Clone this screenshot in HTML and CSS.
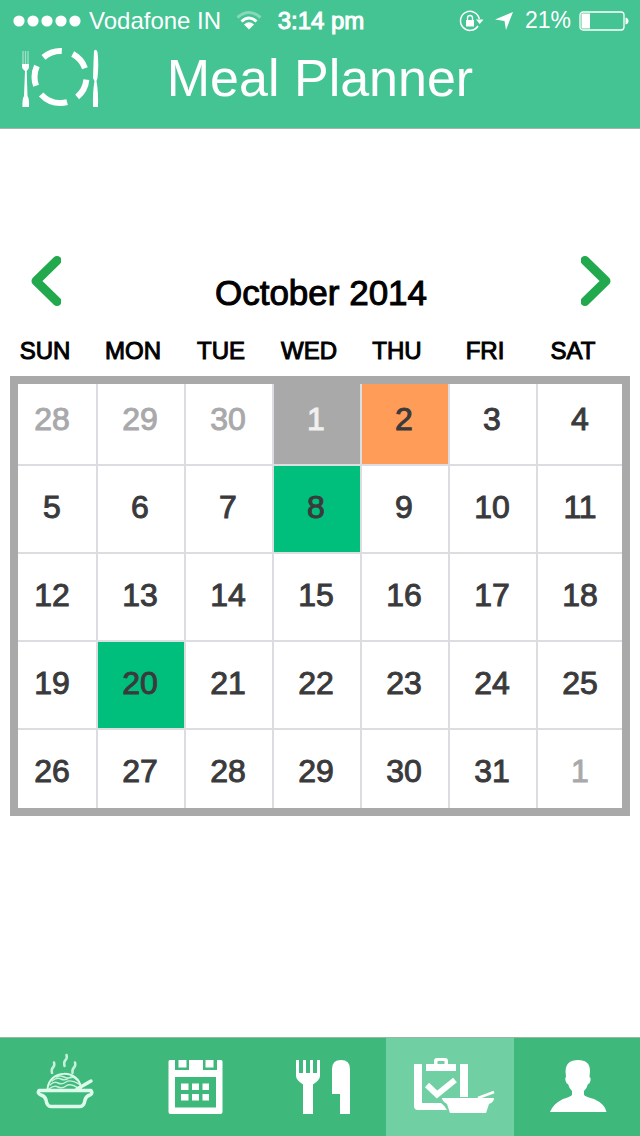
FILE: index.html
```html
<!DOCTYPE html>
<html lang="en">
<head>
<meta charset="utf-8">
<meta name="viewport" content="width=device-width, initial-scale=1">
<title>Meal Planner</title>
<link rel="stylesheet" href="styles.css">
</head>
<body>
<div class="app">
  <header class="header">
    <div class="status">
      <div class="status-left">
        <svg class="icon" width="68" height="12" viewBox="0 0 68 12"><circle cx="6" cy="6" r="5.6"/><circle cx="20" cy="6" r="5.6"/><circle cx="34" cy="6" r="5.6"/><circle cx="48" cy="6" r="5.6"/><circle cx="62" cy="6" r="5.6"/></svg>
        <span class="carrier">Vodafone IN</span>
        <svg class="icon wifi" width="26" height="20" viewBox="0 0 26 20">
          <path d="M1.5 6.5Q13-3.5 24.500 6.500" fill="none" stroke="#fff" stroke-width="3" opacity=".35"/>
          <path d="M5.500 10.500Q13 3.500 20.500 10.500" fill="none" stroke="#fff" stroke-width="3"/>
          <path d="M8 13.500Q13 9 18 13.500L13 18.500Z"/>
        </svg>
      </div>
      <time class="clock">3:14 pm</time>
      <div class="status-right">
        <svg class="icon" width="24" height="22" viewBox="0 0 24 22">
          <path d="M19 16A9.500 9.500 0 1 1 20.300 9" fill="none" stroke="#fff" stroke-width="1.500"/>
          <path d="M17 9.500H24.500L20.700 14Z"/>
          <rect x="7" y="10" width="8" height="6.500"/>
          <path d="M8.500 10V8a2.500 2.500 0 0 1 5 0v2" fill="none" stroke="#fff" stroke-width="1.300"/>
        </svg>
        <svg class="icon" width="18" height="18" viewBox="0 0 18 18"><path d="M18 0L11 18 9.500 9 0 7.500Z"/></svg>
        <span class="percent">21%</span>
        <svg class="icon" width="50" height="20" viewBox="0 0 50 20"><rect x="1" y="1" width="44" height="18" rx="3" fill="none" stroke="#fff" stroke-width="1.300"/><path d="M2.500 2.500H11v15H2.500ZM46.500 6.500Q49.500 7 49.500 10T46.500 13.500Z"/></svg>
      </div>
    </div>
    <div class="titlebar">
      <svg class="icon" width="80" height="60" viewBox="0 0 80 60">
        <circle cx="40.500" cy="29" r="26" pathLength="360" fill="none" stroke="#fff" stroke-width="6" stroke-dasharray="0 6 44 25 63 22 45 24 44 25 42 20"/>
        <path d="M2 16h7v3q0 2-2.300 4L7.500 48q2 3 1.500 11H2.500Q2 51 4 48L5 23Q2 21 2 19Z"/>
        <path d="M3 3V17M5.500 3V17M8 3V17" stroke="#fff" stroke-width="1.300" opacity=".5"/>
        <path d="M74 3q2-3 3.500 1 1.500 12 0 26l-1 3q2 11 1.500 26H73q-.5-15 1.500-26L73 30Q73.500 13 74 3Z"/>
      </svg>
      <h1 class="title">Meal Planner</h1>
    </div>
  </header>

  <main class="main">
    <div class="month">
      <button class="arrow" type="button" aria-label="Previous month"><svg width="30" height="50" viewBox="0 0 30 50"><path d="M26 4.500L5 25 26 45.500"/></svg></button>
      <h2 class="month-name">October 2014</h2>
      <button class="arrow" type="button" aria-label="Next month"><svg width="30" height="50" viewBox="0 0 30 50"><path d="M4 4.500L25 25 4 45.500"/></svg></button>
    </div>
    <table class="calendar">
      <thead>
        <tr><th>SUN</th><th>MON</th><th>TUE</th><th>WED</th><th>THU</th><th>FRI</th><th>SAT</th></tr>
      </thead>
      <tbody>
        <tr><td class="muted"><button>28</button></td><td class="muted"><button>29</button></td><td class="muted"><button>30</button></td><td class="past"><button>1</button></td><td class="today"><button>2</button></td><td><button>3</button></td><td><button>4</button></td></tr>
        <tr><td><button>5</button></td><td><button>6</button></td><td><button>7</button></td><td class="planned"><button>8</button></td><td><button>9</button></td><td><button>10</button></td><td><button>11</button></td></tr>
        <tr><td><button>12</button></td><td><button>13</button></td><td><button>14</button></td><td><button>15</button></td><td><button>16</button></td><td><button>17</button></td><td><button>18</button></td></tr>
        <tr><td><button>19</button></td><td class="planned"><button>20</button></td><td><button>21</button></td><td><button>22</button></td><td><button>23</button></td><td><button>24</button></td><td><button>25</button></td></tr>
        <tr><td><button>26</button></td><td><button>27</button></td><td><button>28</button></td><td><button>29</button></td><td><button>30</button></td><td><button>31</button></td><td class="muted"><button>1</button></td></tr>
      </tbody>
    </table>
  </main>

  <nav class="tabs" aria-label="Sections">
    <button class="tab" type="button" aria-label="Recipes">
      <svg class="icon" width="64" height="64" viewBox="0 0 64 64">
        <g fill="none" stroke="#dcfbea" stroke-linecap="round" stroke-linejoin="round">
          <path d="M21 7.500q1 3-1 5t-1 5.500M33.500 0q1 3-1 5t-1 6M42 7.500q1 3-1 5t-1.500 5.500" stroke-width="2.500" opacity=".85"/>
          <path d="M14.500 34C16 14 46 14 48 33" stroke-width="2"/>
          <path d="M17 30q4-4 8-2t8-1 13 2M16 34q5-4 9-2t8-1 12 2M19 26q5-4 9-2t8-1 8 2M23 22q4-2 8 0t9 0" stroke-width="1.500" opacity=".85"/>
          <path d="M58 26L44 34" stroke-width="3.500"/>
          <path d="M6 35.500H58q2 3-1 4.500-4 1-5 5-1 6.500-5 6.500H18q-4 0-5-6.500-1-4-5-5-4-1.500-2-4.500Z" stroke-width="3.500"/>
        </g>
      </svg>
    </button>
    <button class="tab" type="button" aria-label="Calendar">
      <svg class="icon" width="64" height="64" viewBox="0 0 64 64"><path fill-rule="evenodd" d="M8 5h5v10h14V5h14v10h14V5h4q1.500 0 1.500 1.500V57q0 2-2 2H8.500q-2 0-2-2V6.500Q6.500 5 8 5ZM13 22V52.500H54V22Z"/><path d="M16.500 5h8v7.500h-8ZM43.500 5h8v7.500h-8ZM19 28.500h7.500V35H19ZM30 28.500h7V35h-7ZM40.500 28.500H47V35h-6.500ZM19 39h7.500v6.500H19ZM30 39h7v6.500h-7ZM40.500 39H47v6.500h-6.500Z"/></svg>
    </button>
    <button class="tab" type="button" aria-label="Meals">
      <svg class="icon" width="64" height="64" viewBox="0 0 64 64"><path d="M6 5h3v13h4V5h3v13h4V5h3v13h4V5h3v16q0 4-7 8.500V59H13V29.500Q6 25 6 21ZM42 39V14q0-9 9-9t9 9V59H50V39Z"/></svg>
    </button>
    <button class="tab active" type="button" aria-label="Planner" aria-current="page">
      <svg class="icon" width="88" height="64" viewBox="-12 0 88 64">
        <path d="M-4 9H4V48H23q3 2 6 7H0q-4 0-4-4ZM42 9h8V42h-8ZM8 9h8V6q0-3 3-3h8q3 0 3 3v3h8v7H8ZM19.500 6v3h7V6Z" fill-rule="evenodd"/>
        <path d="M9 30l10 9.500L37 25" fill="none" stroke="#fff" stroke-width="6"/>
        <path d="M24 43H76q0 4-5 6l-3 9H32l-3-9q-5-3-5-6Z"/>
        <path d="M60 43l16-6" stroke="#fff" stroke-width="2.500"/>
      </svg>
    </button>
    <button class="tab" type="button" aria-label="Profile">
      <svg class="icon" width="64" height="64" viewBox="0 0 64 64"><path d="M33 5q12 0 12 11l-.5 6q2 1 .5 5-.5 2-2 2-1 4-4 7v4q2 2 10 4 11 5 12.500 13H5Q8 49 18 44q7-2 9-4v-4q-3-3-4-7-1.500 0-2-2-1.500-4 0-5l-.5-6Q21 5 33 5Z"/></svg>
    </button>
  </nav>
</div>
</body>
</html>
```
FILE: styles.css
```css
* { box-sizing: border-box; }

body {
  margin: 0;
  background: #fff;
  font-family: "Liberation Sans", Arial, sans-serif;
}

button {
  padding: 0;
  border: 0;
  background: none;
  color: inherit;
  font: inherit;
  cursor: pointer;
}

svg { display: block; }
.icon { fill: #fff; overflow: visible; }

.app {
  display: flex;
  flex-direction: column;
  min-height: 100vh;
}

/* Header */
.header {
  background: #44c393;
  border-bottom: 1px solid #a5b5ae;
  color: #fff;
}

.status {
  display: grid;
  grid-template-columns: 1fr auto 1fr;
  align-items: center;
  height: 41px;
  padding: 0 11px 0 13px;
  font-size: 24px;
}

.status-left,
.status-right {
  display: flex;
  align-items: center;
  gap: 8px;
}

.wifi { margin-left: 7px; }
.clock { -webkit-text-stroke: 1px; }

.status-right {
  justify-content: flex-end;
  gap: 12px;
}

.percent {
  font-size: 23px;
  margin-right: -4px;
}

.titlebar {
  display: grid;
  grid-template-columns: 1fr auto 1fr;
  align-items: center;
  padding: 7px 20px 20px;
}

.title {
  margin: 0;
  font-size: 52px;
  font-weight: 400;
  line-height: 60px;
}

/* Month switcher */
.main {
  flex: 1;
  padding: 127px 10px 40px;
}

.month {
  display: flex;
  justify-content: space-between;
  align-items: flex-start;
  padding: 0 19px 12px 21px;
}

.arrow svg {
  fill: none;
  stroke: #22a84d;
  stroke-width: 9px;
  stroke-linecap: round;
  stroke-linejoin: round;
}

.month-name {
  margin: 0;
  padding-top: 17px;
  font-size: 35px;
  font-weight: 400;
  line-height: 40px;
  -webkit-text-stroke: 1px;
}

/* Calendar */
.calendar,
.calendar thead,
.calendar tbody { display: block; }

.calendar tr { display: grid; }

.calendar thead tr {
  grid-template-columns: 79fr repeat(5, 88fr) 101fr;
}

.calendar th {
  padding: 0;
  font-size: 24px;
  font-weight: 400;
  line-height: 51px;
  -webkit-text-stroke: 1px;
}

.calendar th:first-child { padding-right: 9px; }
.calendar th:last-child { padding-right: 13px; }

.calendar tbody {
  border: 8px solid #a9a9a9;
  color: #3a3a3c;
}

.calendar tbody tr {
  grid-template-columns: 80fr repeat(5, 88fr) 84fr;
  height: 88px;
}

.calendar td {
  display: grid;
  padding: 0;
  border-right: 2px solid #dcdde1;
  border-bottom: 2px solid #dcdde1;
}

.calendar td button {
  padding: 0 2px 4px 0;
  font-size: 32px;
  -webkit-text-stroke: 1px;
}

.calendar td:first-child button { padding-right: 10px; }
.calendar td:last-child { border-right: 0; }
.calendar td:last-child button { padding-right: 0; }

.calendar tbody tr:first-child { height: 82px; }
.calendar tbody tr:first-child button { padding-bottom: 10px; }
.calendar tbody tr:last-child { height: 78px; }
.calendar tbody tr:last-child td { border-bottom: 0; }
.calendar tbody tr:last-child button { padding-top: 4px; padding-bottom: 0; }

.calendar .muted { color: #a9a9ab; }
.calendar .past { background: #a9a9a9; color: #f0f0f0; }
.calendar .today { background: #ff9c58; }
.calendar .planned { background: #00bf7c; }

/* Bottom tabs */
.tabs {
  display: grid;
  grid-template-columns: 129fr 129fr 128fr 128fr 126fr;
  height: 99px;
  border-top: 1px solid #9bb5a8;
  background: #3fb87c;
}

.tab {
  display: grid;
  place-items: center;
}

.active { background: #71d0a3; }
```
